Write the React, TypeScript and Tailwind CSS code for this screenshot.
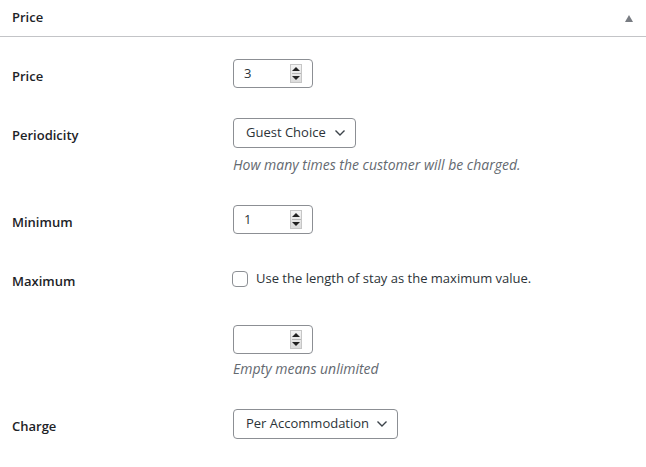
import React from "react";

function Spinner() {
  return (
    <span className="flex h-[19px] w-[12px] flex-col items-center justify-center gap-[2px] border border-[#c6c6c6] bg-[linear-gradient(#f3f3f3,#dcdcdc)]">
      <span className="h-0 w-0 border-x-[4px] border-b-[4px] border-x-transparent border-b-[#222]" />
      <span className="h-[1px] w-[9px] bg-[#b5b5b5]" />
      <span className="h-0 w-0 border-x-[4px] border-t-[4px] border-x-transparent border-t-[#222]" />
    </span>
  );
}

function NumberBox({ value }: { value?: string }) {
  return (
    <div className="flex h-[29px] w-[80px] items-center justify-between rounded-[4px] border border-[#8c8f94] bg-white pl-[10px] pr-[10px] text-[13px] text-[#2c3338]">
      <span>{value ?? ""}</span>
      <Spinner />
    </div>
  );
}

function SelectBox({ label, width }: { label: string; width: string }) {
  return (
    <div
      className={`flex h-[30px] ${width} items-center justify-between rounded-[4px] border border-[#8c8f94] bg-white pl-[12px] pr-[8px] text-[13px] text-[#2c3338]`}
    >
      <span>{label}</span>
      <svg width="12" height="8" viewBox="0 0 12 8" className="mr-[1px]">
        <polyline points="1.5,1.5 6,6 10.5,1.5" fill="none" stroke="#3c434a" strokeWidth="1.4" />
      </svg>
    </div>
  );
}

function Row({ label, pt, children }: { label: string; pt: string; children: React.ReactNode }) {
  return (
    <div className={`flex items-start ${pt} pb-[15px]`}>
      <div className="h-[29px] w-[233px] shrink-0 pl-[12px] leading-[35px] text-[13px] font-semibold text-[#1d2327]">
        {label}
      </div>
      <div className="flex flex-col items-start">{children}</div>
    </div>
  );
}

export default function App() {
  return (
    <div className="h-[467px] w-[646px] bg-white" style={{ fontFamily: '"Open Sans", "Noto Sans", sans-serif' }}>
      <div className="flex h-[37px] items-center justify-between border-b border-[#c3c4c7] pl-[12px] pr-[13px]">
        <span className="text-[13px] font-semibold text-[#1d2327]">Price</span>
        <span className="h-0 w-0 border-x-[4px] border-b-[7px] border-x-transparent border-b-[#787c82]" />
      </div>
      <div className="pt-[7px]">
        <Row label="Price" pt="pt-[15px]">
          <NumberBox value="3" />
        </Row>
        <Row label="Periodicity" pt="pt-[15px]">
          <SelectBox label="Guest Choice" width="w-[123px]" />
          <p className="mt-[7px] text-[14px] italic leading-[20px] text-[#646970]">
            How many times the customer will be charged.
          </p>
        </Row>
        <Row label="Minimum" pt="pt-[15px]">
          <NumberBox value="1" />
        </Row>
        <Row label="Maximum" pt="pt-[15px]">
          <label className="flex h-[30px] items-center gap-[8px] text-[13px] text-[#2c3338]">
            <span className="ml-[-1px] h-[16px] w-[16px] rounded-[4px] border border-[#8c8f94] bg-white" />
            Use the length of stay as the maximum value.
          </label>
          <div className="mt-[31px]">
            <NumberBox />
          </div>
          <p className="mt-[5px] text-[14px] italic leading-[20px] text-[#646970]">Empty means unlimited</p>
        </Row>
        <Row label="Charge" pt="pt-[15px]">
          <SelectBox label="Per Accommodation" width="w-[165px]" />
        </Row>
      </div>
    </div>
  );
}
